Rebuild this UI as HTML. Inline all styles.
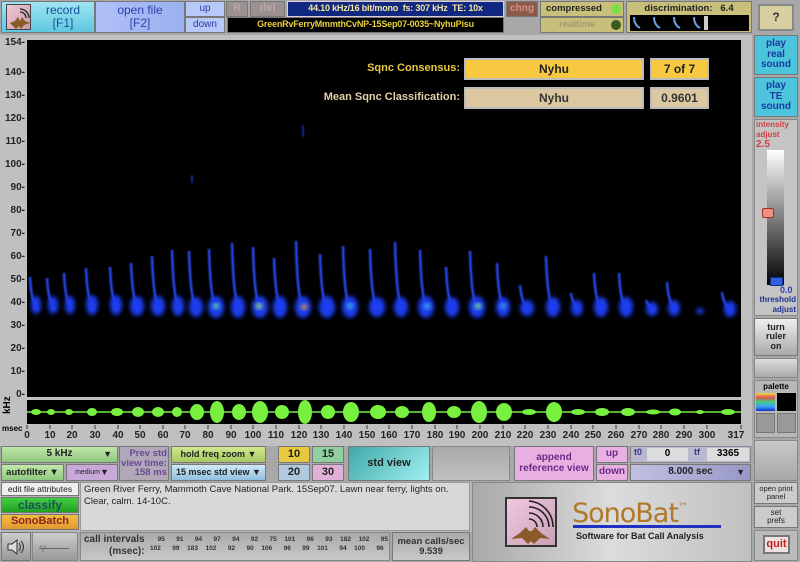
<!DOCTYPE html>
<html><head><meta charset="utf-8"><style>
*{margin:0;padding:0;box-sizing:border-box}
body{width:800px;height:562px;overflow:hidden;background:#b8b8b8;font-family:"Liberation Sans",sans-serif;position:relative}
.a{position:absolute}
.b{position:absolute;display:flex;align-items:center;justify-content:center;text-align:center;font-weight:bold;border:1px solid #777;line-height:1.05;white-space:nowrap;overflow:hidden}
.yl{position:absolute;left:0;width:25px;text-align:right;font-size:10px;font-weight:bold;color:#222}
.tl{position:absolute;top:430px;font-size:10px;font-weight:bold;color:#222;transform:translateX(-50%)}
</style></head><body>
<div class="a" style="left:0;top:0;width:800px;height:35px;background:#a8a8a8"></div>
<div class="b" style="left:1px;top:1px;width:94px;height:32px;background:linear-gradient(#9fe4f2,#5ec8e0);color:#1a4fa0;font-size:12px;justify-content:flex-end;padding-right:14px;font-weight:normal;white-space:normal">record<br>[F1]</div>
<div class="a" style="left:6px;top:4px;width:25px;height:26px;background:linear-gradient(135deg,#f0c8d8,#c89aa8);border:1px solid #444"><svg width="25" height="26"><path d="M13 7a6 6 0 0 1 6 6M13 4a9 9 0 0 1 9 9" stroke="#222" fill="none" stroke-width="1.3"/><path d="M3 18l5-2 3-4 2 4 2-4 3 4 5 2-6 2-3 4-2-3-3 3z" fill="#8a5a28"/></svg></div>
<div class="b" style="left:95px;top:1px;width:90px;height:32px;background:linear-gradient(90deg,#b0c0f8,#9ab0f0);color:#2a40a8;font-size:12px;font-weight:normal">open file<br>[F2]</div>
<div class="b" style="left:185px;top:1px;width:40px;height:16px;background:#b8c8f8;color:#2a40a8;font-size:10px;font-weight:normal">up</div>
<div class="b" style="left:185px;top:17px;width:40px;height:16px;background:#b8c8f8;color:#2a40a8;font-size:10px;font-weight:normal">down</div>
<div class="b" style="left:226px;top:1px;width:22px;height:16px;background:#9a9090;color:#b8a8a8;font-size:11px">R</div>
<div class="b" style="left:250px;top:1px;width:35px;height:16px;background:#9a9090;color:#b8a8a8;font-size:11px">del</div>
<div class="b" style="left:287px;top:1px;width:217px;height:16px;background:#102880;color:#f4e8a0;font-size:9px;border-color:#dcd;letter-spacing:-0.2px">44.10 kHz/16 bit/mono&nbsp; fs: 307 kHz&nbsp; TE: 10x</div>
<div class="b" style="left:227px;top:17px;width:277px;height:16px;background:#000;color:#e8d038;font-size:9px;letter-spacing:-0.2px">GreenRvFerryMmmthCvNP-15Sep07-0035~NyhuPisu</div>
<div class="b" style="left:506px;top:1px;width:32px;height:16px;background:#8a5a4a;color:#d89080;font-size:10px">chng</div>
<div class="b" style="left:540px;top:1px;width:84px;height:16px;background:#c8c07a;color:#222;font-size:9.5px;justify-content:flex-start;padding-left:5px">compressed<span class="a" style="left:70px;top:2px;width:10px;height:10px;border-radius:50%;background:#78e040"></span></div>
<div class="b" style="left:540px;top:17px;width:84px;height:16px;background:#c8c07a;color:#a09a70;font-size:9.5px;justify-content:flex-start;padding-left:18px">realtime<span class="a" style="left:70px;top:2px;width:10px;height:10px;border-radius:50%;background:#3a5a20"></span></div>
<div class="b" style="left:626px;top:1px;width:126px;height:32px;background:#c8c07a;color:#222;font-size:9.5px;align-items:flex-start;padding-top:2px">discrimination:&nbsp;&nbsp; 6.4</div>
<div class="a" style="left:630px;top:15px;width:119px;height:16px;background:#000"><svg width="119" height="16"><g stroke="#6aa0e0" stroke-width="2" fill="none"><path d="M4 2q0 8 6 11"/><path d="M24 2q0 8 6 11"/><path d="M44 2q0 8 6 11"/><path d="M64 2q0 8 6 11"/></g><rect x="74" y="1" width="4" height="14" fill="#ccc"/></svg></div>
<div class="b" style="left:758px;top:4px;width:36px;height:27px;background:#d8d0a0;color:#333;font-size:12px;border:2px solid #888">?</div>

<div class="a" style="left:0;top:35px;width:752px;height:411px;background:#c0c0c0"></div>
<div class="a" style="left:27px;top:40px;width:714px;height:357px;background:#000"></div>
<div class="yl" style="top:37px">154-</div>
<div class="yl" style="top:67px">140-</div>
<div class="yl" style="top:90px">130-</div>
<div class="yl" style="top:113px">120-</div>
<div class="yl" style="top:136px">110-</div>
<div class="yl" style="top:159px">100-</div>
<div class="yl" style="top:182px">90-</div>
<div class="yl" style="top:205px">80-</div>
<div class="yl" style="top:228px">70-</div>
<div class="yl" style="top:251px">60-</div>
<div class="yl" style="top:274px">50-</div>
<div class="yl" style="top:297px">40-</div>
<div class="yl" style="top:320px">30-</div>
<div class="yl" style="top:343px">20-</div>
<div class="yl" style="top:366px">10-</div>
<div class="yl" style="top:389px">0-</div>
<div class="a" style="left:2px;top:414px;font-size:10px;font-weight:bold;transform:rotate(-90deg);transform-origin:left top">kHz</div>

<svg class="a" style="left:0;top:0" width="752" height="446">
<defs><filter id="bl"><feGaussianBlur stdDeviation="2"/></filter>
<filter id="bl2"><feGaussianBlur stdDeviation="0.8"/></filter></defs>
<g filter="url(#bl2)">
<g stroke="#2a50ff" stroke-width="2.6" fill="none" opacity="0.9">
<path d="M30 277C31 295 33 303 38 310"/><path d="M47 278C48 295 50 303 55 310"/><path d="M64 273C65 293 67 303 72 310"/><path d="M86 268C87 290 89 303 94 310"/><path d="M110 267C111 290 113 303 118 310"/><path d="M131 263C132 288 134 303 139 310"/><path d="M152 256C153 286 155 303 160 310"/><path d="M172 250C173 283 175 303 180 310"/><path d="M189 251C190 283 192 303 197 310"/><path d="M209 249C210 283 212 303 217 310"/><path d="M232 243C233 280 235 303 240 310"/><path d="M253 247C254 282 256 303 261 310"/><path d="M274 258C275 286 277 303 282 310"/><path d="M296 241C297 280 299 303 304 310"/><path d="M320 254C321 285 323 303 328 310"/><path d="M343 246C344 282 346 303 351 310"/><path d="M370 249C371 283 373 303 378 310"/><path d="M395 242C396 280 398 303 403 310"/><path d="M420 250C421 283 423 303 428 310"/><path d="M446 267C447 290 449 303 454 310"/><path d="M470 251C471 283 473 303 478 310"/><path d="M497 263C498 288 500 303 505 310"/><path d="M520 285C521 296 523 303 528 310"/><path d="M546 256C547 286 549 303 554 310"/><path d="M571 293C572 300 574 305 579 310"/><path d="M594 273C595 293 597 303 602 310"/><path d="M619 273C620 293 622 303 627 310"/><path d="M646 300C647 304 649 306 654 310"/><path d="M667 282C668 296 670 303 675 310"/><path d="M722 292C723 300 725 305 730 310"/>
</g>
<path d="M303 125v12M192 175v8" stroke="#1a30c0" stroke-width="1.5"/>
</g>
<g filter="url(#bl)" fill="#1c3cf0">
<g id="cl">
<ellipse cx="36" cy="305" rx="5" ry="9"/><ellipse cx="53" cy="305" rx="5" ry="9"/><ellipse cx="70" cy="305" rx="5" ry="9"/><ellipse cx="92" cy="305" rx="6" ry="10"/><ellipse cx="116" cy="305" rx="6" ry="10"/><ellipse cx="137" cy="306" rx="7" ry="10"/><ellipse cx="158" cy="306" rx="7" ry="10"/><ellipse cx="178" cy="306" rx="6" ry="10"/><ellipse cx="196" cy="307" rx="7" ry="10"/><ellipse cx="216" cy="307" rx="8" ry="11"/><ellipse cx="238" cy="307" rx="7" ry="11"/><ellipse cx="260" cy="307" rx="8" ry="11"/><ellipse cx="280" cy="307" rx="7" ry="11"/><ellipse cx="303" cy="307" rx="8" ry="11"/><ellipse cx="327" cy="307" rx="8" ry="11"/><ellipse cx="350" cy="307" rx="8" ry="11"/><ellipse cx="377" cy="307" rx="8" ry="10"/><ellipse cx="401" cy="307" rx="7" ry="10"/><ellipse cx="426" cy="307" rx="8" ry="11"/><ellipse cx="452" cy="307" rx="7" ry="10"/><ellipse cx="477" cy="307" rx="8" ry="11"/><ellipse cx="503" cy="307" rx="7" ry="10"/><ellipse cx="527" cy="308" rx="7" ry="8"/><ellipse cx="553" cy="307" rx="7" ry="10"/><ellipse cx="577" cy="308" rx="6" ry="8"/><ellipse cx="601" cy="307" rx="7" ry="10"/><ellipse cx="626" cy="307" rx="7" ry="10"/><ellipse cx="652" cy="309" rx="6" ry="7"/><ellipse cx="674" cy="308" rx="6" ry="8"/><ellipse cx="700" cy="311" rx="4" ry="3"/><ellipse cx="730" cy="309" rx="6" ry="8"/>
</g>
</g>
<g filter="url(#bl)">
<ellipse cx="216" cy="306" rx="3" ry="3" fill="#60e0a0"/><ellipse cx="259" cy="306" rx="3" ry="3" fill="#a0f060"/><ellipse cx="304" cy="307" rx="3" ry="3" fill="#e0a030"/><ellipse cx="478" cy="306" rx="3" ry="3" fill="#80f080"/><ellipse cx="427" cy="306" rx="3" ry="3" fill="#40c0e0"/><ellipse cx="350" cy="306" rx="3" ry="3" fill="#40c0e0"/><ellipse cx="503" cy="306" rx="2.5" ry="2.5" fill="#40c0e0"/>
</g>
<rect x="27" y="400" width="714" height="24" fill="#000"/>
<line x1="27" y1="412" x2="741" y2="412" stroke="#70f040" stroke-width="1.5"/>
<g fill="#78f040">
<ellipse cx="36" cy="412" rx="5" ry="3"/><ellipse cx="51" cy="412" rx="4" ry="3"/><ellipse cx="69" cy="412" rx="4" ry="3"/><ellipse cx="92" cy="412" rx="5" ry="4"/><ellipse cx="117" cy="412" rx="6" ry="4"/><ellipse cx="138" cy="412" rx="6" ry="5"/><ellipse cx="158" cy="412" rx="6" ry="5"/><ellipse cx="177" cy="412" rx="5" ry="5"/><ellipse cx="197" cy="412" rx="7" ry="8"/><ellipse cx="217" cy="412" rx="7" ry="11"/><ellipse cx="239" cy="412" rx="7" ry="8"/><ellipse cx="260" cy="412" rx="8" ry="11"/><ellipse cx="282" cy="412" rx="7" ry="7"/><ellipse cx="305" cy="412" rx="7" ry="12"/><ellipse cx="328" cy="412" rx="7" ry="7"/><ellipse cx="351" cy="412" rx="8" ry="10"/><ellipse cx="378" cy="412" rx="8" ry="7"/><ellipse cx="402" cy="412" rx="7" ry="6"/><ellipse cx="429" cy="412" rx="7" ry="10"/><ellipse cx="454" cy="412" rx="7" ry="6"/><ellipse cx="479" cy="412" rx="8" ry="11"/><ellipse cx="504" cy="412" rx="8" ry="9"/><ellipse cx="529" cy="412" rx="7" ry="3"/><ellipse cx="554" cy="412" rx="8" ry="10"/><ellipse cx="578" cy="412" rx="7" ry="3"/><ellipse cx="602" cy="412" rx="7" ry="4"/><ellipse cx="628" cy="412" rx="7" ry="4"/><ellipse cx="653" cy="412" rx="7" ry="2.5"/><ellipse cx="675" cy="412" rx="6" ry="3.5"/><ellipse cx="700" cy="412" rx="4" ry="2"/><ellipse cx="728" cy="412" rx="7" ry="3"/>
</g>
<g stroke="#333"><path d="M27 425v4M50 425v4M72 425v4M95 425v4M118 425v4M140 425v4M163 425v4M185 425v4M208 425v4M231 425v4M253 425v4M276 425v4M299 425v4M321 425v4M344 425v4M367 425v4M389 425v4M412 425v4M435 425v4M457 425v4M480 425v4M503 425v4M525 425v4M548 425v4M571 425v4M593 425v4M616 425v4M639 425v4M661 425v4M684 425v4M707 425v4M741 425v4"/></g>
</svg>
<div class="a" style="left:2px;top:424px;font-size:8px;font-weight:bold">msec</div>
<div class="tl" style="left:27px">0</div><div class="tl" style="left:50px">10</div><div class="tl" style="left:72px">20</div><div class="tl" style="left:95px">30</div><div class="tl" style="left:118px">40</div><div class="tl" style="left:140px">50</div><div class="tl" style="left:163px">60</div><div class="tl" style="left:185px">70</div><div class="tl" style="left:208px">80</div><div class="tl" style="left:231px">90</div><div class="tl" style="left:253px">100</div><div class="tl" style="left:276px">110</div><div class="tl" style="left:299px">120</div><div class="tl" style="left:321px">130</div><div class="tl" style="left:344px">140</div><div class="tl" style="left:367px">150</div><div class="tl" style="left:389px">160</div><div class="tl" style="left:412px">170</div><div class="tl" style="left:435px">180</div><div class="tl" style="left:457px">190</div><div class="tl" style="left:480px">200</div><div class="tl" style="left:503px">210</div><div class="tl" style="left:525px">220</div><div class="tl" style="left:548px">230</div><div class="tl" style="left:571px">240</div><div class="tl" style="left:593px">250</div><div class="tl" style="left:616px">260</div><div class="tl" style="left:639px">270</div><div class="tl" style="left:661px">280</div><div class="tl" style="left:684px">290</div><div class="tl" style="left:707px">300</div><div class="tl" style="left:736px">317</div>

<div class="a" style="left:300px;top:62px;width:160px;text-align:right;color:#e8c840;font-size:11px;font-weight:bold">Sqnc Consensus:</div>
<div class="a" style="left:280px;top:91px;width:180px;text-align:right;color:#e0d0a8;font-size:11px;font-weight:bold">Mean Sqnc Classification:</div>
<div class="b" style="left:464px;top:58px;width:180px;height:22px;background:#f8c840;border:2px solid #bbb;font-size:12px;color:#222">Nyhu</div>
<div class="b" style="left:650px;top:58px;width:59px;height:22px;background:#f8c840;border:2px solid #bbb;font-size:12px;color:#222">7 of 7</div>
<div class="b" style="left:464px;top:87px;width:180px;height:22px;background:#dcc8a0;border:2px solid #bbb;font-size:12px;color:#333">Nyhu</div>
<div class="b" style="left:650px;top:87px;width:59px;height:22px;background:#dcc8a0;border:2px solid #bbb;font-size:12px;color:#333">0.9601</div>

<div class="a" style="left:752px;top:35px;width:48px;height:527px;background:#a8a8a8"></div>
<div class="b" style="left:754px;top:35px;width:44px;height:40px;background:#4cc4dc;color:#1a3aa0;font-size:10px">play<br>real<br>sound</div>
<div class="b" style="left:754px;top:77px;width:44px;height:40px;background:#4cc4dc;color:#1a3aa0;font-size:10px">play<br>TE<br>sound</div>
<div class="a" style="left:754px;top:119px;width:44px;height:197px;background:#c4c4c4;border:1px solid #888"></div>
<div class="a" style="left:756px;top:120px;font-size:8px;font-weight:bold;color:#d04040;line-height:10px">intensity<br>adjust<br><span style="font-size:10px">2.5</span></div>
<div class="a" style="left:767px;top:150px;width:17px;height:135px;background:linear-gradient(#fff,#000)"></div>
<div class="a" style="left:762px;top:208px;width:12px;height:10px;background:#f09080;border:1px solid #a03030;border-radius:2px"></div>
<div class="a" style="left:770px;top:277px;width:13px;height:9px;background:#3060e0;border:1px solid #103080"></div>
<div class="a" style="left:780px;top:285px;font-size:9px;font-weight:bold;color:#3040b0">0.0</div>
<div class="a" style="left:756px;top:295px;font-size:8px;font-weight:bold;color:#203090;line-height:10px;text-align:right;width:40px">threshold<br>adjust</div>
<div class="b" style="left:754px;top:318px;width:44px;height:38px;background:linear-gradient(#eee,#aaa);color:#222;font-size:9px">turn<br>ruler<br>on</div>
<div class="a" style="left:754px;top:358px;width:44px;height:20px;background:linear-gradient(#ddd,#aaa);border:1px solid #888"></div>
<div class="a" style="left:754px;top:380px;width:44px;height:58px;background:#b8b8b8;border:1px solid #888"></div>
<div class="a" style="left:754px;top:382px;width:44px;text-align:center;font-size:8px;font-weight:bold">palette</div>
<div class="a" style="left:756px;top:393px;width:19px;height:18px;background:linear-gradient(#f0e040,#e05050,#40d080,#40a0ff,#1030c0)"></div>
<div class="a" style="left:777px;top:393px;width:19px;height:18px;background:#000"></div>
<div class="a" style="left:756px;top:413px;width:19px;height:20px;background:#999;border:1px solid #777"></div>
<div class="a" style="left:777px;top:413px;width:19px;height:20px;background:#999;border:1px solid #777"></div>

<div class="a" style="left:0;top:446px;width:752px;height:36px;background:#a8a8a8"></div>
<div class="b" style="left:1px;top:446px;width:117px;height:17px;background:linear-gradient(#c0e8a8,#90c880);color:#222;font-size:10px">5 kHz<span class="a" style="right:5px;top:3px;font-size:9px">▼</span></div>
<div class="b" style="left:1px;top:464px;width:63px;height:17px;background:linear-gradient(#c0e8a8,#90c880);color:#222;font-size:9.5px">autofilter ▼</div>
<div class="b" style="left:66px;top:464px;width:52px;height:17px;background:#c8a8d8;color:#222;font-size:7px;font-weight:normal">medium <span style="font-size:9px">▼</span></div>
<div class="b" style="left:119px;top:446px;width:50px;height:35px;background:#b0a8b8;color:#6a4a90;font-size:9.5px;text-align:right;white-space:normal">Prev std<br>view time:<br>158 ms</div>
<div class="b" style="left:171px;top:446px;width:95px;height:17px;background:linear-gradient(#d0e890,#a8c860);color:#222;font-size:9px">hold freq zoom ▼</div>
<div class="b" style="left:171px;top:464px;width:95px;height:17px;background:linear-gradient(#d0e8f8,#90c0e0);color:#222;font-size:9px">15 msec std view ▼</div>
<div class="b" style="left:278px;top:446px;width:32px;height:17px;background:#e8c840;color:#222;font-size:11px">10</div>
<div class="b" style="left:312px;top:446px;width:32px;height:17px;background:#90d0a0;color:#222;font-size:11px">15</div>
<div class="b" style="left:278px;top:464px;width:32px;height:17px;background:#b0c8e0;color:#222;font-size:11px">20</div>
<div class="b" style="left:312px;top:464px;width:32px;height:17px;background:#e0b0d8;color:#222;font-size:11px">30</div>
<div class="b" style="left:348px;top:446px;width:82px;height:35px;background:linear-gradient(135deg,#40a8a8,#a0f0f0);color:#222;font-size:11px">std view</div>
<div class="a" style="left:432px;top:446px;width:78px;height:35px;background:linear-gradient(#aaa,#c0c0c0);border:1px solid #888"></div>
<div class="b" style="left:514px;top:446px;width:80px;height:35px;background:#e8b0e0;color:#6a2a8a;font-size:10px">append<br>reference view</div>
<div class="b" style="left:596px;top:446px;width:32px;height:17px;background:#e8b0e0;color:#6a2a8a;font-size:10px">up</div>
<div class="b" style="left:596px;top:464px;width:32px;height:17px;background:#e8b0e0;color:#6a2a8a;font-size:10px">down</div>
<div class="a" style="left:630px;top:446px;width:121px;height:17px;background:#b8b8d0;border:1px solid #888"></div>
<div class="a" style="left:634px;top:447px;font-size:9px;font-weight:bold;color:#3a3a80">t0</div>
<div class="b" style="left:647px;top:448px;width:41px;height:13px;background:#ddd;font-size:10px;border:none">0</div>
<div class="a" style="left:694px;top:447px;font-size:9px;font-weight:bold;color:#3a3a80">tf</div>
<div class="b" style="left:707px;top:448px;width:42px;height:13px;background:#ddd;font-size:10px;border:none">3365</div>
<div class="b" style="left:630px;top:464px;width:121px;height:17px;background:linear-gradient(90deg,#c0c0e0,#9898c8);color:#222;font-size:10px">8.000 sec<span class="a" style="right:5px;top:3px;font-size:9px">▼</span></div>
<div class="a" style="left:754px;top:440px;width:44px;height:41px;background:linear-gradient(#c8c8c8,#a8a8a8);border:1px solid #888"></div>

<div class="b" style="left:1px;top:482px;width:78px;height:14px;background:#eee;color:#222;font-size:8.5px;font-weight:normal">edit file attributes</div>
<div class="b" style="left:1px;top:497px;width:78px;height:16px;background:linear-gradient(#40d040,#20a020);color:#1a5060;font-size:12px">classify</div>
<div class="b" style="left:1px;top:514px;width:78px;height:16px;background:linear-gradient(#f0c040,#e09830);color:#902020;font-size:11px">SonoBatch</div>
<div class="a" style="left:80px;top:482px;width:390px;height:49px;background:#d8d8d8;border:1px solid #999;padding:1px 3px;font-size:9.5px;color:#222;line-height:12px">Green River Ferry, Mammoth Cave National Park. 15Sep07. Lawn near ferry, lights on.<br>Clear, calm. 14-10C.</div>
<div class="a" style="left:472px;top:482px;width:280px;height:80px;background:linear-gradient(90deg,#a8a8a8,#dcdcdc,#c0c0c0);border:1px solid #888"></div>
<div class="a" style="left:505px;top:497px;width:52px;height:50px;background:linear-gradient(135deg,#f0c8e0,#c8a0b8);border:2px solid #333"><svg width="48" height="46"><path d="M22 20a8 8 0 0 1 8 8M22 14a14 14 0 0 1 14 14M22 8a20 20 0 0 1 20 20M22 2a26 26 0 0 1 24 26" stroke="#222" fill="none" stroke-width="1.6"/><path d="M4 40l9-6 6-6 3 4 3 0 3-4 6 6 9 6-10-1-6 6-3-3-3 3-6-6z" fill="#8a5a28"/></svg></div>
<div class="a" style="left:572px;top:493px;font-size:27px;color:#b07828;font-family:'DejaVu Sans',sans-serif;letter-spacing:-1px;line-height:30px">SonoBat<sup style="font-size:10px;color:#b07828;vertical-align:12px">™</sup></div>
<div class="a" style="left:573px;top:525px;width:148px;height:3px;background:#2030c0"></div>
<div class="a" style="left:576px;top:531px;font-size:9px;font-weight:bold;color:#222">Software for Bat Call Analysis</div>
<div class="b" style="left:754px;top:482px;width:44px;height:22px;background:#ccc;font-size:7.5px;font-weight:normal;color:#222">open print<br>panel</div>
<div class="b" style="left:754px;top:506px;width:44px;height:22px;background:#ccc;font-size:8px;font-weight:normal;color:#222">set<br>prefs</div>
<div class="a" style="left:754px;top:530px;width:44px;height:31px;background:#bbb;border:1px solid #888"></div>
<div class="b" style="left:763px;top:535px;width:27px;height:19px;background:#f0e0e0;color:#c02020;font-size:11px;border:2px solid #777">quit</div>
<div class="a" style="left:0;top:532px;width:472px;height:30px;background:#a8a8a8"></div>
<div class="b" style="left:1px;top:532px;width:30px;height:29px;background:linear-gradient(#ccc,#999)"><svg width="20" height="16"><path d="M2 5h4l5-4v14l-5-4H2z" fill="#ddd" stroke="#333"/><path d="M13 4q3 4 0 8M15 2q5 6 0 12" stroke="#333" fill="none"/></svg></div>
<div class="a" style="left:32px;top:532px;width:46px;height:29px;background:linear-gradient(#ccc,#999);border:1px solid #888"><div class="a" style="left:6px;top:15px;width:30px;height:1px;background:#666"></div><div class="a" style="left:7px;top:11px;font-size:8px;color:#555">▽</div></div>
<div class="a" style="left:80px;top:532px;width:310px;height:29px;background:linear-gradient(#aaa,#c8c8c8);border:1px solid #888"></div>
<div class="a" style="left:84px;top:534px;font-size:10px;font-weight:bold;color:#333;text-align:right;line-height:12px">call intervals<br>(msec):</div>
<div class="a" style="left:150px;top:535px;font-size:6.5px;color:#333;line-height:9px;word-spacing:2px;font-weight:bold;white-space:pre">  95   91   94   97   94   92   75  101   96   93  182  102   95   99  184
102   99  183  102   92   90  106   96   99  101   94  100   96   97   98</div>
<div class="b" style="left:392px;top:532px;width:78px;height:29px;background:linear-gradient(#aaa,#c8c8c8);color:#333;font-size:9.5px">mean calls/sec<br>9.539</div>
</body></html>
